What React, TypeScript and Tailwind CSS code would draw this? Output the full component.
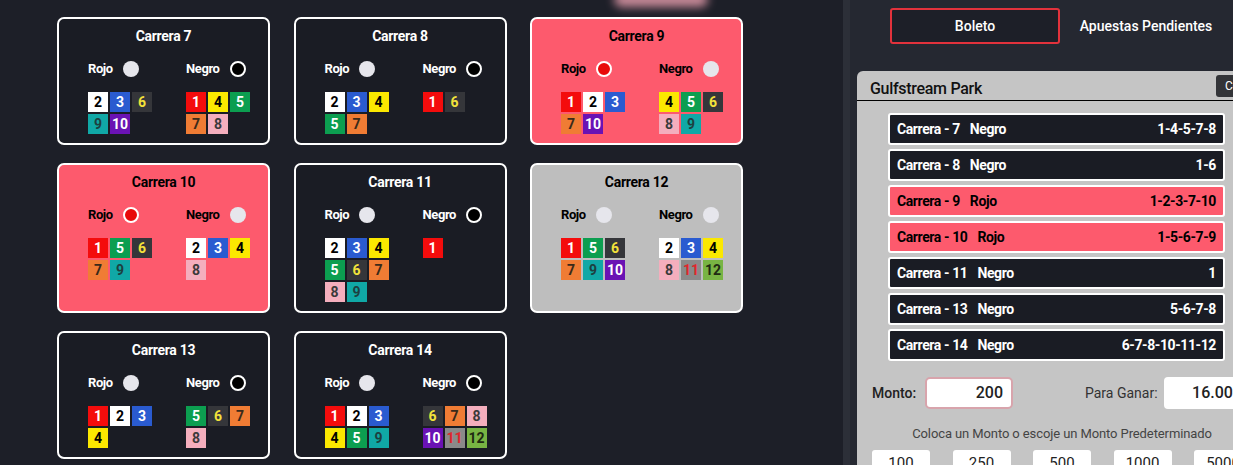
import React from 'react'

type Pick = 'rojo' | 'negro' | null
type Tone = 'dark' | 'red' | 'gray'

interface Race {
  n: number
  tone: Tone
  pick: Pick
  rojo: number[]
  negro: number[]
}

const races: Race[] = [
  { n: 7, tone: 'dark', pick: 'negro', rojo: [2, 3, 6, 9, 10], negro: [1, 4, 5, 7, 8] },
  { n: 8, tone: 'dark', pick: 'negro', rojo: [2, 3, 4, 5, 7], negro: [1, 6] },
  { n: 9, tone: 'red', pick: 'rojo', rojo: [1, 2, 3, 7, 10], negro: [4, 5, 6, 8, 9] },
  { n: 10, tone: 'red', pick: 'rojo', rojo: [1, 5, 6, 7, 9], negro: [2, 3, 4, 8] },
  { n: 11, tone: 'dark', pick: 'negro', rojo: [2, 3, 4, 5, 6, 7, 8, 9], negro: [1] },
  { n: 12, tone: 'gray', pick: null, rojo: [1, 5, 6, 7, 9, 10], negro: [2, 3, 4, 8, 11, 12] },
  { n: 13, tone: 'dark', pick: 'negro', rojo: [1, 2, 3, 4], negro: [5, 6, 7, 8] },
  { n: 14, tone: 'dark', pick: 'negro', rojo: [1, 2, 3, 4, 5, 9], negro: [6, 7, 8, 10, 11, 12] },
]

// saddle cloth colours
const chipStyle: Record<number, string> = {
  1: 'bg-[#f40c0c] text-white',
  2: 'bg-white text-black',
  3: 'bg-[#2a5bd0] text-white',
  4: 'bg-[#fbe800] text-black',
  5: 'bg-[#0c9e50] text-white',
  6: 'bg-[#35363a] text-[#f2e23a]',
  7: 'bg-[#f07c34] text-[#3a2a1a]',
  8: 'bg-[#f4aebd] text-[#3a3a3a]',
  9: 'bg-[#10a8a6] text-[#1d4040]',
  10: 'bg-[#6a12b4] text-white',
  11: 'bg-[#8a8a8a] text-[#e0262c]',
  12: 'bg-[#78b443] text-[#1f2a12]',
}

const tickets = [
  { n: 7, color: 'Negro', nums: '1-4-5-7-8', red: false },
  { n: 8, color: 'Negro', nums: '1-6', red: false },
  { n: 9, color: 'Rojo', nums: '1-2-3-7-10', red: true },
  { n: 10, color: 'Rojo', nums: '1-5-6-7-9', red: true },
  { n: 11, color: 'Negro', nums: '1', red: false },
  { n: 13, color: 'Negro', nums: '5-6-7-8', red: false },
  { n: 14, color: 'Negro', nums: '6-7-8-10-11-12', red: false },
]

function Chip({ n }: { n: number }) {
  return (
    <div className={`w-5 h-5 flex items-center justify-center text-[14px] font-bold leading-none ${chipStyle[n]}`}>
      {n}
    </div>
  )
}

function Dot({ on, kind }: { on: boolean; kind: 'rojo' | 'negro' }) {
  if (!on) return <span className="w-4 h-4 rounded-full bg-[#e6e6ec]" />
  return (
    <span
      className={`w-4 h-4 rounded-full border-2 border-white ${kind === 'rojo' ? 'bg-[#e80a0a]' : 'bg-black'}`}
    />
  )
}

function RaceCard({ race }: { race: Race }) {
  const bg =
    race.tone === 'red' ? 'bg-[#fd5a6d] text-black' : race.tone === 'gray' ? 'bg-[#bebebe] text-black' : 'bg-[#1a1c24] text-white'

  return (
    <div className={`border-2 border-white rounded-[7px] pt-[7px] ${bg}`}>
      <div className="text-center text-[14px] font-bold leading-5 tracking-[-0.3px]">Carrera {race.n}</div>
      <div className="grid grid-cols-[98px_1fr] pl-[29px] mt-[14px]">
        {(['rojo', 'negro'] as const).map((kind) => (
          <div key={kind}>
            <div className="flex items-center gap-[10px] h-[18px] text-[13px] font-bold tracking-[-0.4px]">
              <span>{kind === 'rojo' ? 'Rojo' : 'Negro'}</span>
              <Dot on={race.pick === kind} kind={kind} />
            </div>
            <div className="grid grid-cols-[20px_20px_20px] gap-[2px] mt-[14px]">
              {race[kind].map((c) => (
                <Chip key={c} n={c} />
              ))}
            </div>
          </div>
        ))}
      </div>
    </div>
  )
}

function TicketRow({ t }: { t: (typeof tickets)[number] }) {
  return (
    <div
      className={`w-[337px] h-8 border-2 border-white rounded-[3px] flex items-center justify-between pl-[7px] pr-[7px] text-[14px] font-bold tracking-[-0.4px] ${
        t.red ? 'bg-[#fd5a6d] text-black' : 'bg-[#1a1c24] text-white'
      }`}
    >
      <span>
        Carrera - {t.n}
        <span className="ml-[10px]">{t.color}</span>
      </span>
      <span>{t.nums}</span>
    </div>
  )
}

export default function App() {
  return (
    <div className="w-[1233px] h-[465px] overflow-hidden flex bg-[#1d1f28] font-['Roboto',sans-serif]">
      {/* Races */}
      <div className="relative w-[843px] shrink-0">
        <div className="absolute left-[614px] -top-[8px] w-[94px] h-[15px] rounded-full bg-[#f3a5b5] blur-[5px] opacity-80" />
        <div className="grid grid-cols-[213px_213px_213px] gap-x-[23.5px] gap-y-[18px] pl-[57px] pt-[17px] grid-rows-[128px_150px_128px]">
          {races.map((r) => (
            <RaceCard key={r.n} race={r} />
          ))}
        </div>
      </div>

      <div className="w-[7px] shrink-0 bg-[#2c2f38]" />

      {/* Ticket */}
      <div className="flex-1 bg-[#252831] overflow-hidden">
        <div className="flex items-center pl-[40px] pt-[8px]">
          <div className="w-[170px] h-9 border-2 border-[#e2323c] rounded-[3px] bg-[#1d1f28] flex items-center justify-center text-white text-[14px] font-medium">
            Boleto
          </div>
          <div className="w-[172px] text-center text-white text-[14px] font-medium">Apuestas Pendientes</div>
        </div>

        <div className="mt-[27px] ml-[7px] w-[410px] h-[500px] bg-[#c5c5c5] rounded-tl-[6px]">
          <div className="h-[30px] border-b border-black flex items-end justify-between pl-[13px] pr-[6px] pb-[1px]">
            <span className="text-[16px] font-medium text-[#111] leading-5 tracking-[-0.3px]">Gulfstream Park</span>
            <span className="self-start mt-[4px] w-[45px] h-[22px] rounded-[3px] bg-[#333438] text-white text-[12px] pl-[9px] leading-[22px]">
              Cerrar
            </span>
          </div>

          <div className="flex flex-col gap-1 pl-[31px] pt-[12px]">
            {tickets.map((t) => (
              <TicketRow key={t.n} t={t} />
            ))}
          </div>

          <div className="flex items-center pl-[15px] mt-[16px] text-[14px]">
            <span className="font-medium text-[#222] w-[53px]">Monto:</span>
            <div className="w-[88px] h-8 bg-white border-2 border-[#d8a4ac] rounded-[5px] flex items-center justify-end pr-[8px] text-[16px] font-medium text-[#222]">
              200
            </div>
            <span className="ml-[72px] text-[#333] w-[79px]">Para Ganar:</span>
            <div className="w-[80px] h-8 bg-white rounded-[4px] flex items-center justify-end pr-[2px] text-[16px] font-medium text-[#222]">
              16.000
            </div>
          </div>

          <div className="text-center text-[13px] text-[#444] mt-[15px] tracking-[-0.1px]">
            Coloca un Monto o escoje un Monto Predeterminado
          </div>

          <div className="flex gap-[22.5px] pl-[15px] mt-[6px]">
            {['100', '250', '500', '1000', '5000'].map((v) => (
              <div key={v} className="w-[58px] h-7 bg-white rounded-[3px] text-center text-[15px] leading-5 text-[#222] pt-[3px]">
                {v}
              </div>
            ))}
          </div>
        </div>
      </div>
    </div>
  )
}
